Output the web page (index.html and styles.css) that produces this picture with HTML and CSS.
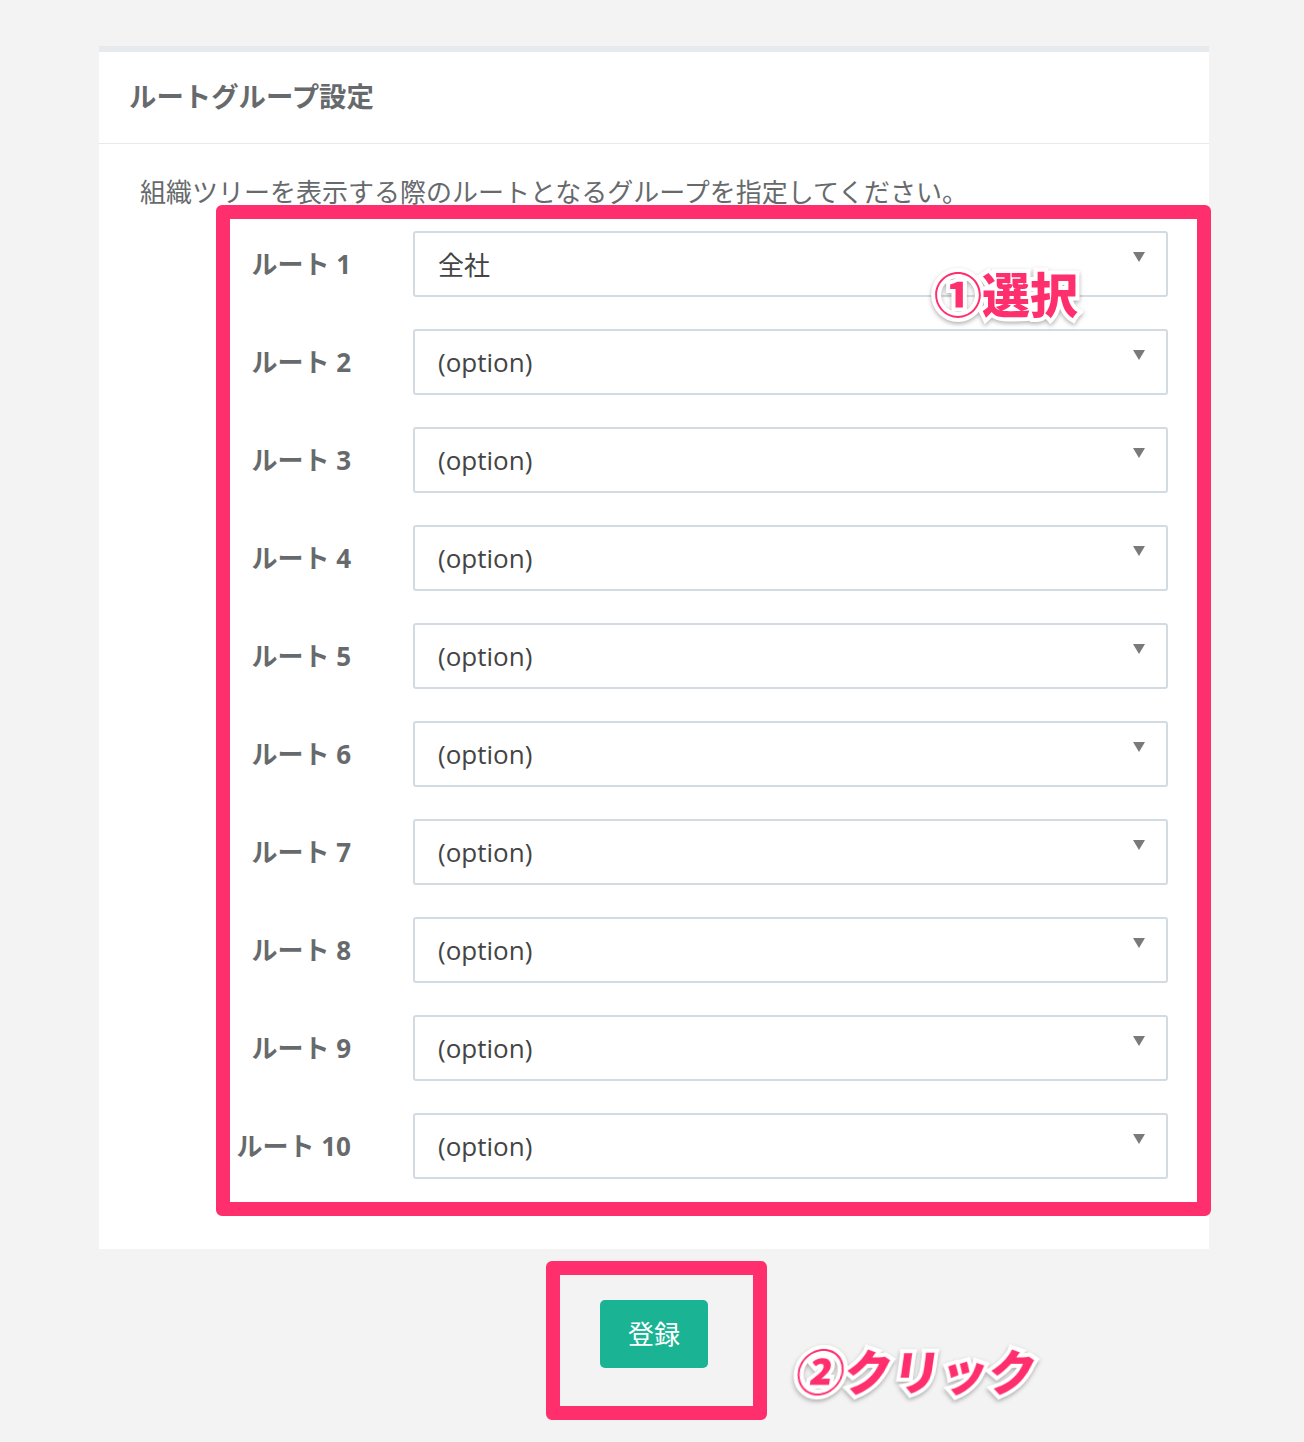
FILE: index.html
```html
<!DOCTYPE html>
<html lang="ja">
<head>
<meta charset="utf-8">
<title>ルートグループ設定</title>
<link rel="stylesheet" href="styles.css">
</head>
<body>
<div class="page">
  <section class="panel">
    <header class="panel-head">
      <h2 class="panel-title">ルートグループ設定</h2>
    </header>
    <div class="panel-body">
      <p class="desc">組織ツリーを表示する際のルートとなるグループを指定してください。</p>
      <div class="form-rows">
        <label class="row-label">ルート 1</label>
        <div class="select"><span class="select-text">全社</span><span class="caret"></span></div>
        <label class="row-label">ルート 2</label>
        <div class="select"><span class="select-text">(option)</span><span class="caret"></span></div>
        <label class="row-label">ルート 3</label>
        <div class="select"><span class="select-text">(option)</span><span class="caret"></span></div>
        <label class="row-label">ルート 4</label>
        <div class="select"><span class="select-text">(option)</span><span class="caret"></span></div>
        <label class="row-label">ルート 5</label>
        <div class="select"><span class="select-text">(option)</span><span class="caret"></span></div>
        <label class="row-label">ルート 6</label>
        <div class="select"><span class="select-text">(option)</span><span class="caret"></span></div>
        <label class="row-label">ルート 7</label>
        <div class="select"><span class="select-text">(option)</span><span class="caret"></span></div>
        <label class="row-label">ルート 8</label>
        <div class="select"><span class="select-text">(option)</span><span class="caret"></span></div>
        <label class="row-label">ルート 9</label>
        <div class="select"><span class="select-text">(option)</span><span class="caret"></span></div>
        <label class="row-label">ルート 10</label>
        <div class="select"><span class="select-text">(option)</span><span class="caret"></span></div>
      </div>
    </div>
  </section>
  <div class="actions">
    <button class="btn-save" type="button">登録</button>
  </div>

  <div class="mark mark-form"></div>
  <div class="mark mark-btn"></div>
  <div class="note note-1">①選択</div>
  <div class="note note-2">②クリック</div>
</div>
</body>
</html>
```
FILE: styles.css
```css
html, body {
  margin: 0;
  padding: 0;
  background: #f3f3f4;
}
body {
  font-family: "Open Sans", "Noto Sans CJK JP", sans-serif;
  color: #676a6c;
}
.page {
  position: relative;
  width: 1304px;
  height: 1442px;
  overflow: hidden;
}
.panel {
  margin: 46px 0 0 99px;
  width: 1110px;
  background: #ffffff;
  border-top: 6px solid #e7eaec;
}
.panel-head {
  box-sizing: border-box;
  height: 92px;
  display: flex;
  align-items: center;
  padding: 0 0 6px 30px;
  border-bottom: 1px solid #e7eaec;
}
.panel-title {
  margin: 0;
  font-size: 27.4px;
  font-weight: 700;
  color: #676a6c;
  font-family: "Noto Sans CJK JP", sans-serif;
}
.panel-body {
  padding: 29px 41px 70px 0;
}
.desc {
  margin: 0 0 22px 41px;
  font-size: 26px;
  line-height: 36px;
  font-family: "Noto Sans CJK JP", sans-serif;
  font-weight: 400;
  color: #676a6c;
}
.form-rows {
  display: grid;
  grid-template-columns: 252px 755px;
  column-gap: 62px;
  row-gap: 32px;
}
.row-label {
  display: flex;
  align-items: center;
  justify-content: flex-end;
  height: 66px;
  padding-bottom: 3px;
  box-sizing: border-box;
  font-size: 26px;
  font-weight: 700;
  color: #676a6c;
  font-family: "Open Sans", "Noto Sans CJK JP", sans-serif;
}
.select {
  position: relative;
  box-sizing: border-box;
  height: 66px;
  border: 2px solid #d3dbe2;
  border-radius: 3px;
  display: flex;
  align-items: center;
  padding-left: 23px;
  background: #fff;
}
.select-text {
  font-size: 26px;
  color: #444;
  font-family: "Open Sans", "Noto Sans CJK JP", sans-serif;
}
.caret {
  position: absolute;
  right: 21px;
  top: 19px;
  width: 0;
  height: 0;
  border-left: 6px solid transparent;
  border-right: 6px solid transparent;
  border-top: 10px solid #7a7a7a;
}
.actions {
  width: 1110px;
  margin-left: 99px;
  padding-top: 51px;
  display: flex;
  justify-content: center;
}
.btn-save {
  width: 108px;
  height: 68px;
  border: none;
  border-radius: 5px;
  background: #1ab394;
  color: #fff;
  font-size: 26px;
  font-family: "Noto Sans CJK JP", sans-serif;
  padding: 0 0 3px;
}
.mark {
  position: absolute;
  box-sizing: border-box;
  border: 14px solid #ff2f6e;
  border-radius: 6px;
}
.mark-form {
  left: 216px;
  top: 205px;
  width: 995px;
  height: 1011px;
}
.mark-btn {
  left: 546px;
  top: 1261px;
  width: 221px;
  height: 159px;
}
.note {
  position: absolute;
  font-family: "Noto Sans CJK JP", sans-serif;
  font-weight: 900;
  color: #ff2f6e;
  font-size: 48px;
  line-height: 1;
  -webkit-text-stroke: 8px #ffffff;
  paint-order: stroke fill;
  filter: drop-shadow(0 2px 2px rgba(0, 0, 0, 0.3));
  white-space: nowrap;
}
.note-1 {
  left: 934px;
  top: 268px;
}
.note-2 {
  left: 797px;
  top: 1346px;
  transform: skewX(-8deg);
}
```
